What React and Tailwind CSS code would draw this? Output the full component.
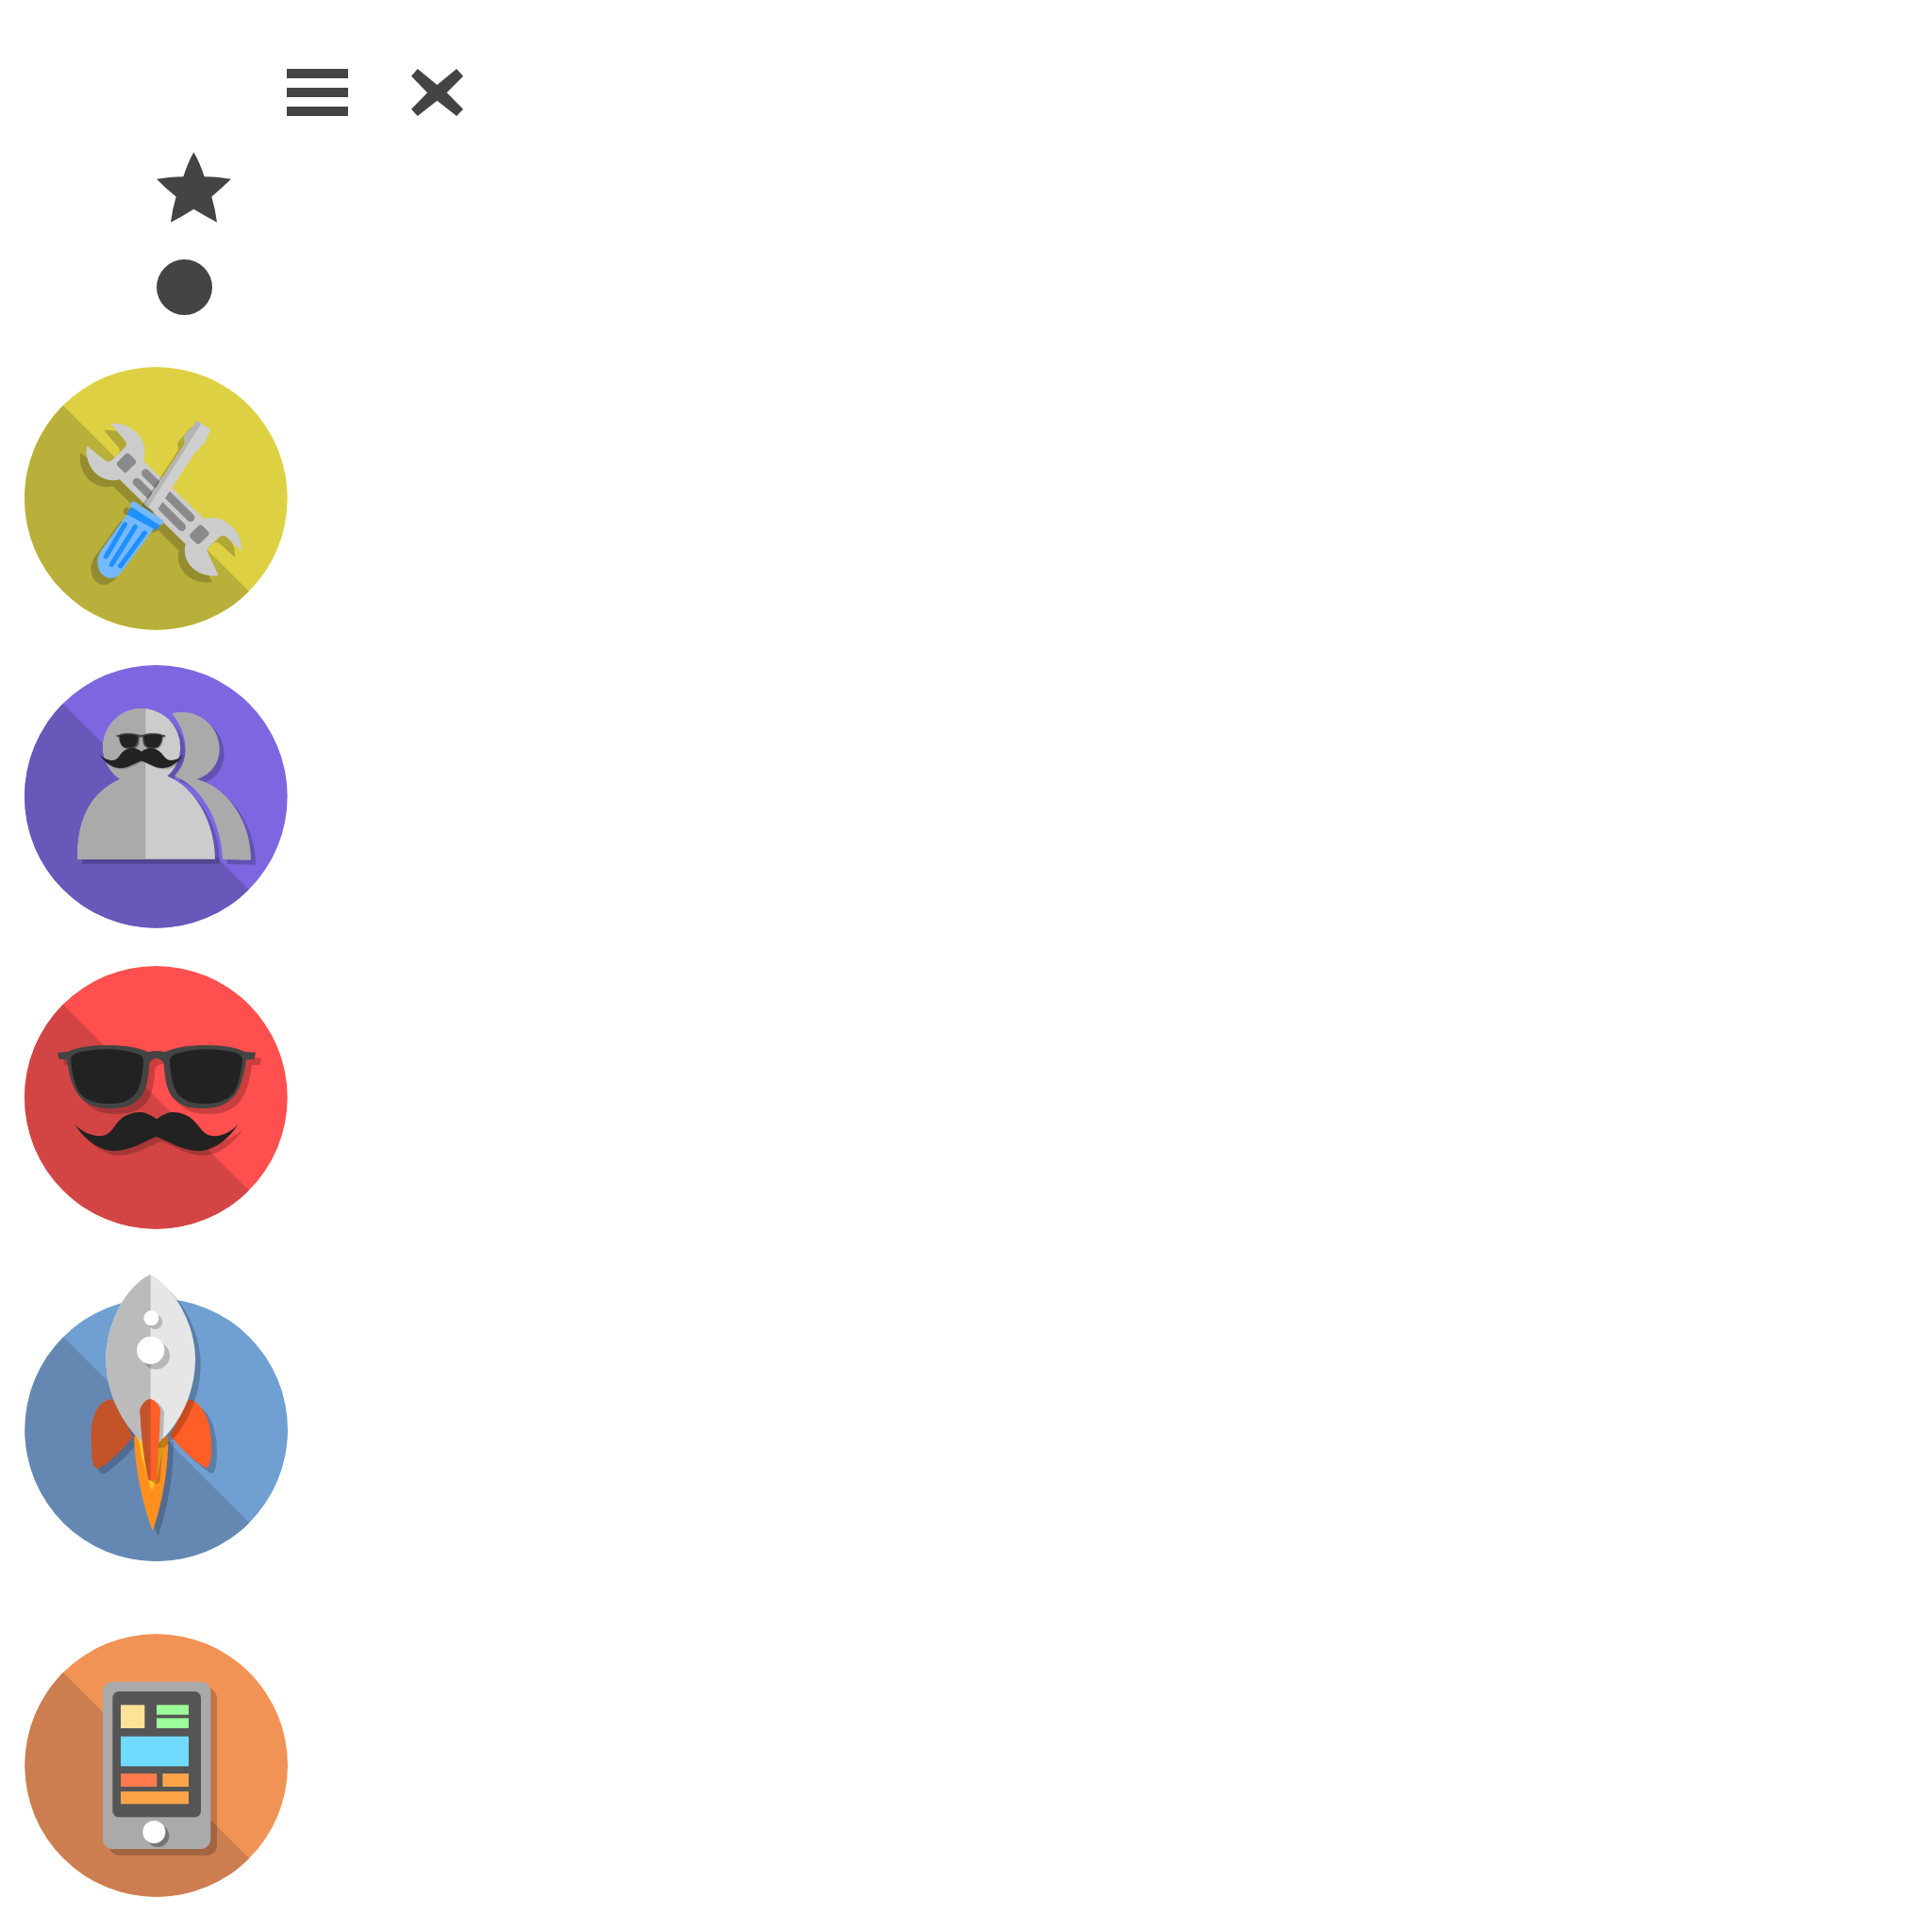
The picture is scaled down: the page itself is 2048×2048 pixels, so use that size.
import React from "react";

function Disc({ cx, cy, light, dark }) {
  const r = 418;
  const d = r * Math.SQRT1_2;
  return (
    <>
      <circle cx={cx} cy={cy} r={r} fill={light} />
      <path d={`M${cx - d} ${cy - d} A${r} ${r} 0 0 0 ${cx + d} ${cy + d} Z`} fill={dark} />
    </>
  );
}

const WRENCH =
  "M292 208 C350 200 402 245 400 300 Q399 315 395 325 L590 510 C650 495 712 545 708 612 L660 568 Q650 560 640 566 L604 600 Q596 608 600 616 L635 690 C570 700 515 650 530 590 L320 385 C260 400 205 345 217 278 L275 325 Q288 332 298 322 L335 285 Q345 275 340 265 Z";
const DRIVER_HANDLE =
  "M345 495 L262 610 Q250 630 250 648 Q252 690 285 698 Q310 702 328 678 L437 530 Z";
const DRIVER_SHAFT =
  "M567 198 L610 226 L590 270 L560 300 L435 490 L400 465 L528 270 L525 248 Z";

function ToolsIcon() {
  return (
    <svg viewBox="0 0 900 900" className="w-[300px] h-[300px] mt-[46px] ml-[20px]">
      <Disc cx={436} cy={445} light="#ddd143" dark="#b9af3b" />
      <path d={WRENCH} fill="#000" opacity="0.2" transform="translate(-21 21)" />
      <path d={WRENCH} fill="#cccccc" />
      <rect x="320" y="305" width="44" height="54" rx="11" fill="#8a8a8a" transform="rotate(45 342 332)" />
      <rect x="552" y="533" width="44" height="54" rx="11" fill="#8a8a8a" transform="rotate(45 574 560)" />
      <path d="M403 365 L546 506 M375 393 L518 536" stroke="#8a8a8a" strokeWidth="26" strokeLinecap="round" fill="none" />
      <g opacity="0.2" transform="translate(-21 21)">
        <path d={DRIVER_SHAFT} fill="#000" />
        <path d={DRIVER_HANDLE} fill="#000" />
        <path d="M365 465 L450 520" stroke="#000" strokeWidth="24" strokeLinecap="round" />
      </g>
      <path d={DRIVER_SHAFT} fill="#cfcfcf" />
      <path d="M567 198 L580 207 L412 473 L400 465 L528 270 L525 248 Z" fill="#b5b5b5" />
      <path d={DRIVER_HANDLE} fill="#74b8ff" />
      <path d="M358 470 L452 525 L437 547 L343 495 Z" fill="#1e90ff" />
      <path d="M365 465 L449 520" stroke="#74b8ff" strokeWidth="20" strokeLinecap="round" />
      <path d="M337 528 L277 630 M370 535 L295 655 M400 555 L323 660" stroke="#1e90ff" strokeWidth="15" strokeLinecap="round" />
    </svg>
  );
}

const GLASS_FRAME =
  "M123 287 L155 285 C190 268 240 264 280 264 C340 264 385 272 412 286 Q438 279 438 284 L438 306 Q425 306 415 320 C410 400 400 465 290 465 C190 465 165 400 153 310 L127 308 Z";
const GLASS_LENS =
  "M165 310 Q163 298 185 288 Q240 275 290 277 Q350 280 385 295 Q397 302 396 315 Q392 390 370 420 Q345 450 290 450 Q215 450 190 410 Q172 380 165 310 Z";
const MOUSTACHE =
  "M178 515 C200 540 235 553 258 553 C290 553 300 525 318 505 C340 480 385 470 410 483 C425 488 435 497 438 499 C442 497 452 488 465 483 C490 470 535 480 557 505 C575 525 590 553 620 553 C645 553 675 540 697 515 C670 560 620 600 570 600 C520 600 480 570 438 555 C395 570 355 600 305 600 C255 600 205 560 178 515 Z";

function Glasses({ shadow }) {
  return (
    <>
      <g opacity={shadow ? 0.2 : 1} transform={shadow ? `translate(${shadow} ${shadow})` : undefined}>
        <path d={GLASS_FRAME} fill={shadow ? "#000" : "#444444"} />
        <path d={GLASS_FRAME} fill={shadow ? "#000" : "#444444"} transform="translate(876 0) scale(-1 1)" />
      </g>
      {!shadow && (
        <>
          <path d={GLASS_LENS} fill="#222222" />
          <path d={GLASS_LENS} fill="#222222" transform="translate(876 0) scale(-1 1)" />
        </>
      )}
    </>
  );
}

const PERSON_BACK =
  "M488 170 C500 163 510 165 520 165 C585 165 638 218 638 283 C638 330 605 368 565 378 C660 400 738 510 738 635 L648 633 C645 540 600 410 495 368 C520 340 530 315 530 280 C530 245 515 205 488 170 Z";
const PERSON_FRONT =
  "M186 632 C186 500 230 420 322 378 A123 123 0 1 1 472 368 C555 400 624 510 624 632 Z";

function UsersIcon() {
  return (
    <svg viewBox="0 0 900 900" className="w-[300px] h-[300px] mt-[20px] ml-[20px]">
      <defs>
        <clipPath id="personLeft">
          <rect x="0" y="0" width="403" height="900" />
        </clipPath>
      </defs>
      <Disc cx={436} cy={433} light="#7d66e0" dark="#6a57ba" />
      <g fill="#000" opacity="0.2" transform="translate(15 15)">
        <path d={PERSON_BACK} />
        <path d={PERSON_FRONT} />
      </g>
      <path d={PERSON_BACK} fill="#aaaaaa" />
      <path d={PERSON_FRONT} fill="#cccccc" />
      <path d={PERSON_FRONT} fill="#aaaaaa" clipPath="url(#personLeft)" />
      <g transform="translate(280 167) scale(0.246)">
        <Glasses shadow={12} />
        <Glasses />
      </g>
      <g transform="translate(164 33) scale(0.516)">
        <path d={MOUSTACHE} fill="#000" opacity="0.2" transform="translate(8 8)" />
        <path d={MOUSTACHE} fill="#222222" />
      </g>
    </svg>
  );
}

function FaceIcon() {
  return (
    <svg viewBox="0 0 900 900" className="w-[300px] h-[300px] mt-[20px] ml-[20px]">
      <Disc cx={436} cy={430} light="#ff4f4f" dark="#d34545" />
      <Glasses shadow={18} />
      <path d={MOUSTACHE} fill="#000" opacity="0.2" transform="translate(15 15)" />
      <Glasses />
      <path d={MOUSTACHE} fill="#222222" />
    </svg>
  );
}

const FIN_L = "M298 430 C255 430 230 480 230 540 C230 590 232 625 238 642 Q245 655 260 647 C300 620 335 585 363 548 Z";
const FIN_R = "M540 430 C585 440 612 500 612 570 C614 600 612 625 604 642 Q598 655 585 642 C550 620 515 585 480 545 Z";
const FLAME = "M366 548 C370 670 400 780 425 848 C450 780 475 670 475 548 Z";
const HULL =
  "M418 33 C340 70 277 190 277 300 C277 400 320 500 398 572 L447 566 C520 500 561 400 561 300 C561 190 490 70 418 33 Z";
const NOZZLE =
  "M418 428 Q395 435 385 462 Q392 600 412 685 Q425 695 437 685 Q445 600 450 462 Q440 435 418 428 Z";

function RocketIcon() {
  return (
    <svg viewBox="0 0 900 990" className="w-[300px] h-[330px] mt-[20px] ml-[20px]">
      <defs>
        <clipPath id="rocketLeft">
          <rect x="0" y="0" width="419" height="990" />
        </clipPath>
      </defs>
      <Disc cx={437} cy={527} light="#709fd2" dark="#6588b3" />
      <g fill="#000" opacity="0.2" transform="translate(17 17)">
        <path d={FIN_L} />
        <path d={FIN_R} />
        <path d={FLAME} />
      </g>
      <path d={FIN_L} fill="#c4532a" />
      <path d={FIN_R} fill="#ff5e26" />
      <path d={FLAME} fill="#ff9020" />
      <path d="M380 555 C390 620 410 680 423 720 C440 680 455 620 460 560 Z" fill="#ffc91f" />
      <path d={HULL} fill="#000" opacity="0.2" transform="translate(17 17)" />
      <path d={HULL} fill="#e6e6e6" />
      <path d={HULL} fill="#bbbbbb" clipPath="url(#rocketLeft)" />
      <circle cx="434" cy="184" r="23" fill="#000" opacity="0.2" />
      <circle cx="436" cy="291" r="44" fill="#000" opacity="0.2" />
      <circle cx="421" cy="172" r="24" fill="#ffffff" />
      <circle cx="419" cy="274" r="44" fill="#ffffff" />
      <path d={NOZZLE} fill="#000" opacity="0.2" transform="translate(12 8)" />
      <path d={NOZZLE} fill="#ff5e26" />
      <path d={NOZZLE} fill="#c4532a" clipPath="url(#rocketLeft)" />
    </svg>
  );
}

function PhoneIcon() {
  return (
    <svg viewBox="0 0 900 900" className="w-[300px] h-[300px] mt-[50px] ml-[20px]">
      <Disc cx={437} cy={454} light="#f29356" dark="#cc7e50" />
      <rect x="287" y="208" width="343" height="532" rx="32" fill="#000" opacity="0.2" />
      <rect x="267" y="188" width="343" height="532" rx="32" fill="#aaaaaa" />
      <rect x="298" y="219" width="281" height="400" rx="20" fill="#555555" />
      <rect x="324" y="262" width="76" height="74" fill="#ffe297" />
      <rect x="438" y="262" width="102" height="31" fill="#9cff9a" />
      <rect x="438" y="304" width="102" height="32" fill="#9cff9a" />
      <rect x="324" y="362" width="216" height="95" fill="#71daff" />
      <rect x="324" y="480" width="115" height="42" fill="#ff7b4d" />
      <rect x="457" y="480" width="83" height="42" fill="#ffa349" />
      <rect x="324" y="537" width="216" height="40" fill="#ffa349" />
      <circle cx="442" cy="678" r="36" fill="#000" opacity="0.3" />
      <circle cx="430" cy="666" r="36" fill="#ffffff" />
    </svg>
  );
}

export default function App() {
  return (
    <div className="flex flex-col items-start pt-[73px] bg-white">
      <div className="flex gap-[67px] ml-[304px]">
        <div className="flex flex-col gap-[10px] w-[65px]">
          <div className="h-[10px] bg-[#444444]" />
          <div className="h-[10px] bg-[#444444]" />
          <div className="h-[10px] bg-[#444444]" />
        </div>
        <svg viewBox="918 100 165 150" className="w-[55px] h-[50px]">
          <path
            d="M938 100 L1000 151 L1062 100 L1083 123 L1031 176 L1083 228 L1062 250 L1000 201 L938 250 L918 228 L969 176 L918 123 Z"
            fill="#444444"
          />
        </svg>
      </div>
      <svg viewBox="108 363 237 224" className="w-[79px] h-[75px] mt-[38px] ml-[166px]">
        <path
          d="M226 363 Q245 395 260 441 Q310 442 345 449 Q315 478 283 505 Q295 545 300 587 Q260 565 226 545 Q190 568 153 587 Q158 545 170 505 Q135 478 108 449 Q145 442 193 441 Q208 395 226 363 Z"
          fill="#444444"
        />
      </svg>
      <div className="w-[59px] h-[59px] mt-[39px] ml-[166px] rounded-full bg-[#444444]" />
      <ToolsIcon />
      <UsersIcon />
      <FaceIcon />
      <RocketIcon />
      <PhoneIcon />
    </div>
  );
}
